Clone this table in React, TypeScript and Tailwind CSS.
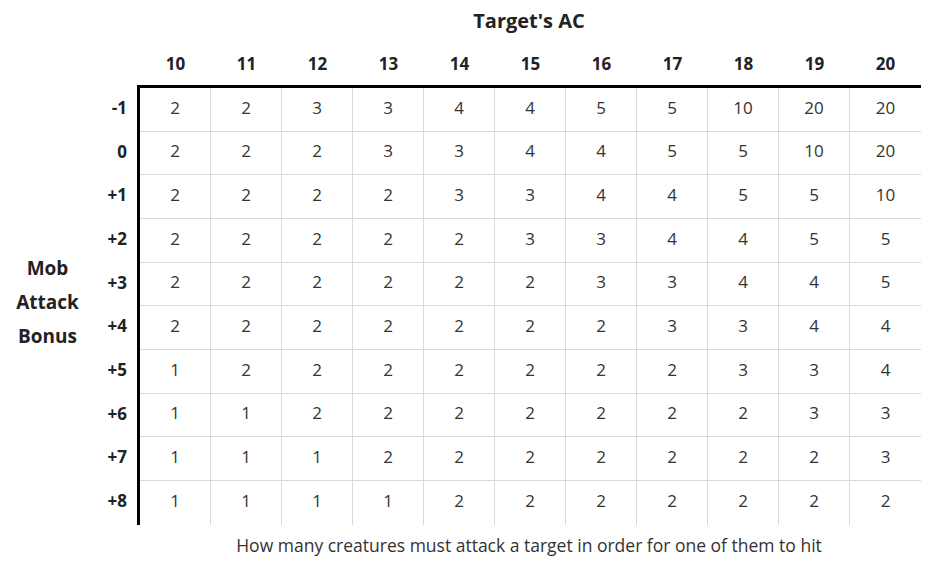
const cols = [10, 11, 12, 13, 14, 15, 16, 17, 18, 19, 20];

const rows: { label: string; values: number[] }[] = [
  { label: '-1', values: [2, 2, 3, 3, 4, 4, 5, 5, 10, 20, 20] },
  { label: '0', values: [2, 2, 2, 3, 3, 4, 4, 5, 5, 10, 20] },
  { label: '+1', values: [2, 2, 2, 2, 3, 3, 4, 4, 5, 5, 10] },
  { label: '+2', values: [2, 2, 2, 2, 2, 3, 3, 4, 4, 5, 5] },
  { label: '+3', values: [2, 2, 2, 2, 2, 2, 3, 3, 4, 4, 5] },
  { label: '+4', values: [2, 2, 2, 2, 2, 2, 2, 3, 3, 4, 4] },
  { label: '+5', values: [1, 2, 2, 2, 2, 2, 2, 2, 3, 3, 4] },
  { label: '+6', values: [1, 1, 2, 2, 2, 2, 2, 2, 2, 3, 3] },
  { label: '+7', values: [1, 1, 1, 2, 2, 2, 2, 2, 2, 2, 3] },
  { label: '+8', values: [1, 1, 1, 1, 2, 2, 2, 2, 2, 2, 2] },
];

export default function App() {
  return (
    <div
      className="w-[947px] h-[561px] bg-white text-[#222] overflow-hidden"
      style={{ fontFamily: '"Open Sans", "Noto Sans", sans-serif' }}
    >
      {/* title */}
      <div className="h-[44px] pl-[137px] flex items-center">
        <div className="w-[784px] text-center text-[20px] font-bold -mt-[2px]">Target's AC</div>
      </div>

      {/* column headers */}
      <div className="h-[41px] pl-[140px] flex">
        {cols.map((c) => (
          <div key={c} className="w-[71px] flex items-center justify-center text-[17px] font-bold -mt-[1px]">
            {c}
          </div>
        ))}
      </div>

      <div className="flex">
        {/* axis label */}
        <div className="w-[95px] flex items-center justify-center">
          <div className="text-center text-[19px] font-bold leading-[34px] -mt-[6px]">
            Mob
            <br />
            Attack
            <br />
            Bonus
          </div>
        </div>

        {/* row labels */}
        <div className="w-[42px] pt-[3px] pr-[10px]">
          {rows.map((r) => (
            <div key={r.label} className="h-[43.67px] pb-[4px] flex items-center justify-end text-[17px] font-bold">
              {r.label}
            </div>
          ))}
        </div>

        {/* grid */}
        <div className="w-[784px] border-l-[3px] border-t-[3px] border-black">
          {rows.map((r, ri) => (
            <div
              key={r.label}
              className={`h-[43.67px] flex ${ri < rows.length - 1 ? 'border-b border-[#d9d9d9]' : ''}`}
            >
              {r.values.map((v, i) => (
                <div
                  key={i}
                  className={`w-[71px] pb-[4px] flex items-center justify-center text-[17px] text-[#333] ${
                    i < r.values.length - 1 ? 'border-r border-[#d9d9d9]' : ''
                  }`}
                >
                  {v}
                </div>
              ))}
            </div>
          ))}
        </div>
      </div>

      {/* caption */}
      <div className="pl-[137px]">
        <div className="w-[784px] text-center text-[17.5px] text-[#333] pt-[7px]">
          How many creatures must attack a target in order for one of them to hit
        </div>
      </div>
    </div>
  );
}
